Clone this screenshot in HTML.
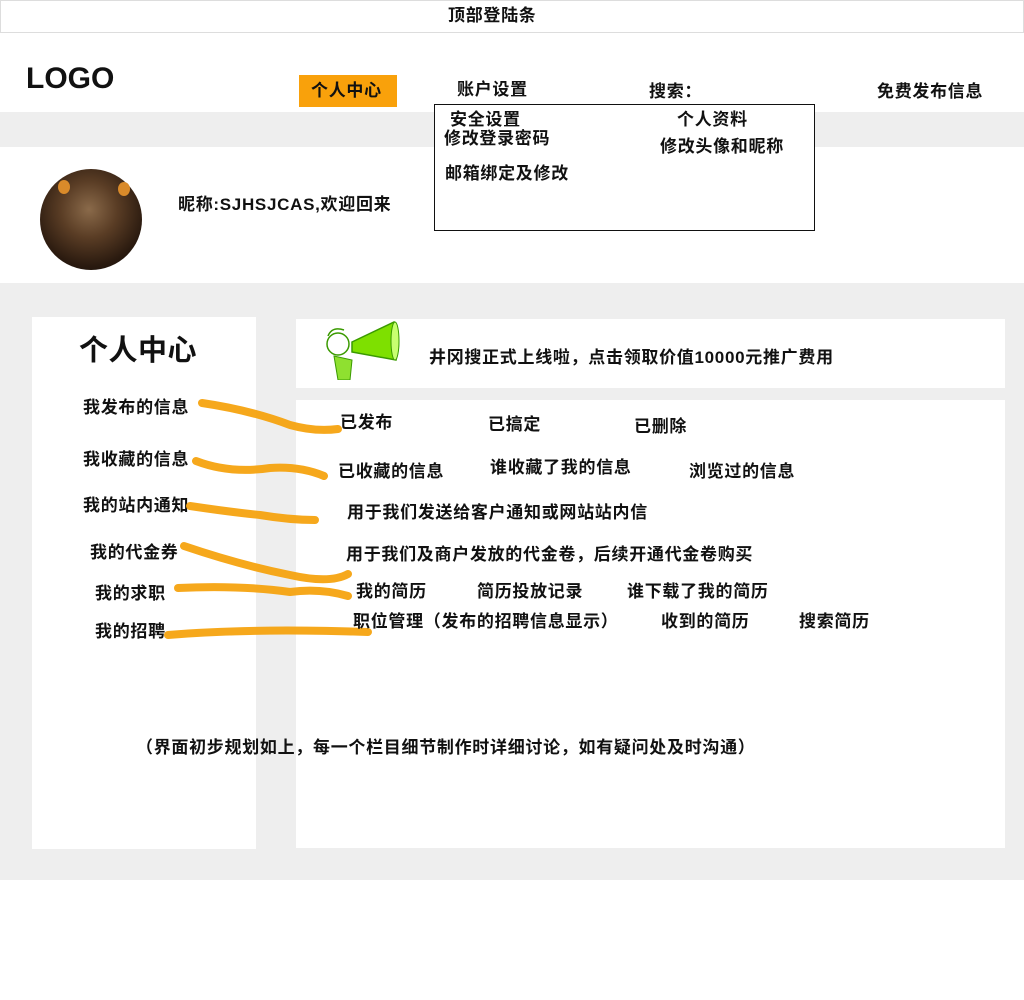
<!DOCTYPE html>
<html><head><meta charset="utf-8"><style>
*{margin:0;padding:0;box-sizing:border-box}
body{width:1024px;height:1000px;position:relative;background:#fff;font-family:"Liberation Sans","Noto Sans CJK SC",sans-serif;font-weight:bold;color:#111;overflow:hidden}
.a{position:absolute;white-space:nowrap;font-size:17px;letter-spacing:0.7px;line-height:20px}
</style></head><body>
<div style="position:absolute;left:0;top:0;width:1024px;height:33px;border:1px solid #ddd;background:#fff"></div>
<div class="a" style="left:448px;top:6px">顶部登陆条</div>
<div class="a" style="left:26px;top:62px;font-size:30px;line-height:34px;letter-spacing:0">LOGO</div>
<div style="position:absolute;left:299px;top:75px;width:98px;height:32px;background:#f9a10b"></div>
<div class="a" style="left:311px;top:81px">个人中心</div>
<div class="a" style="left:457px;top:80px">账户设置</div>
<div class="a" style="left:649px;top:82px">搜索：</div>
<div class="a" style="left:877px;top:82px">免费发布信息</div>
<div style="position:absolute;left:0;top:112px;width:1024px;height:35px;background:#eee"></div>
<div style="position:absolute;left:434px;top:104px;width:381px;height:127px;border:1px solid #111;background:#fff"></div>
<div class="a" style="left:450px;top:110px">安全设置</div>
<div class="a" style="left:444px;top:129px">修改登录密码</div>
<div class="a" style="left:445px;top:164px">邮箱绑定及修改</div>
<div class="a" style="left:677px;top:110px">个人资料</div>
<div class="a" style="left:660px;top:137px">修改头像和昵称</div>
<div style="position:absolute;left:40px;top:169px;width:102px;height:101px;border-radius:50%;background:radial-gradient(circle at 48% 40%,#8a6a4a 0%,#5a3d25 35%,#2a1a0f 70%,#0d0805 100%)"></div>
<div style="position:absolute;left:58px;top:180px;width:12px;height:14px;border-radius:50%;background:#d98a2a"></div>
<div style="position:absolute;left:118px;top:182px;width:12px;height:14px;border-radius:50%;background:#d98a2a"></div>
<div class="a" style="left:178px;top:195px">昵称:SJHSJCAS,欢迎回来</div>
<div style="position:absolute;left:0;top:283px;width:1024px;height:597px;background:#eee"></div>
<div style="position:absolute;left:32px;top:317px;width:224px;height:532px;background:#fff"></div>
<div style="position:absolute;left:296px;top:319px;width:709px;height:69px;background:#fff"></div>
<div style="position:absolute;left:296px;top:400px;width:709px;height:448px;background:#fff"></div>
<div class="a" style="left:79px;top:334px;font-size:29px;line-height:34px;letter-spacing:0.5px">个人中心</div>
<div class="a" style="left:83px;top:398px">我发布的信息</div>
<div class="a" style="left:83px;top:450px">我收藏的信息</div>
<div class="a" style="left:83px;top:496px">我的站内通知</div>
<div class="a" style="left:90px;top:543px">我的代金券</div>
<div class="a" style="left:95px;top:584px">我的求职</div>
<div class="a" style="left:95px;top:622px">我的招聘</div>
<svg style="position:absolute;left:318px;top:320px" width="82" height="60" viewBox="0 0 82 60">
<path d="M34 22 L76 2 Q84 18 78 40 L34 32 Z" fill="#7ee000" stroke="#3a9a00" stroke-width="1.5"/>
<ellipse cx="77" cy="21" rx="4" ry="19" fill="#c8ff70" stroke="#3a9a00"/>
<circle cx="20" cy="24" r="11" fill="#fff" stroke="#3a9a00" stroke-width="1.5"/>
<path d="M10 16 Q14 6 26 10" fill="none" stroke="#3a9a00" stroke-width="1.5"/>
<path d="M16 36 L20 60 L32 60 L34 40 Z" fill="#8fe030" stroke="#3a9a00"/>
</svg>
<div class="a" style="left:429px;top:348px">井冈搜正式上线啦，点击领取价值10000元推广费用</div>
<svg style="position:absolute;left:0;top:0" width="1024" height="1000">
<g fill="none" stroke="#f6a410" stroke-width="8" stroke-linecap="round" opacity="0.95">
<path d="M202 403 Q250 410 290 425 Q315 432 338 429"/>
<path d="M196 461 Q230 474 270 468 Q300 466 324 476"/>
<path d="M190 506 Q230 512 260 515 Q290 520 315 520"/>
<path d="M184 546 Q240 565 290 575 Q330 584 348 574"/>
<path d="M178 588 Q240 585 290 592 Q320 588 348 596"/>
<path d="M168 635 Q250 628 368 632"/>
</g></svg>
<div class="a" style="left:340px;top:413px">已发布</div>
<div class="a" style="left:488px;top:415px">已搞定</div>
<div class="a" style="left:634px;top:417px">已删除</div>
<div class="a" style="left:338px;top:462px">已收藏的信息</div>
<div class="a" style="left:490px;top:458px">谁收藏了我的信息</div>
<div class="a" style="left:689px;top:462px">浏览过的信息</div>
<div class="a" style="left:347px;top:503px">用于我们发送给客户通知或网站站内信</div>
<div class="a" style="left:346px;top:545px">用于我们及商户发放的代金卷，后续开通代金卷购买</div>
<div class="a" style="left:356px;top:582px">我的简历</div>
<div class="a" style="left:477px;top:582px">简历投放记录</div>
<div class="a" style="left:627px;top:582px">谁下载了我的简历</div>
<div class="a" style="left:353px;top:612px">职位管理（发布的招聘信息显示）</div>
<div class="a" style="left:661px;top:612px">收到的简历</div>
<div class="a" style="left:799px;top:612px">搜索简历</div>
<div class="a" style="left:136px;top:738px">（界面初步规划如上，每一个栏目细节制作时详细讨论，如有疑问处及时沟通）</div>
</body></html>
